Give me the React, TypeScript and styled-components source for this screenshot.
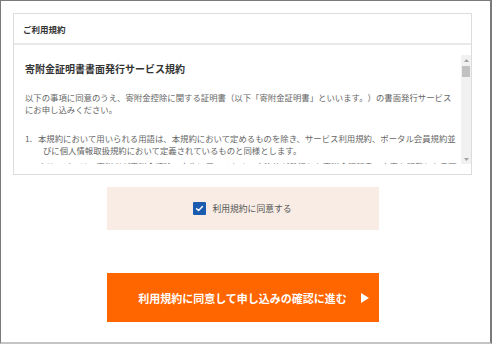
import styled, { createGlobalStyle } from "styled-components"

const GlobalStyle = createGlobalStyle`
  html, body {
    margin: 0;
    padding: 0;
    background: #fff;
  }
  body {
    font-family: "Noto Sans CJK JP", "Noto Sans", sans-serif;
    color: #333;
    text-spacing-trim: space-all;
  }
`

const Frame = styled.div`
  box-sizing: border-box;
  width: 492px;
  height: 344px;
  border: 1px solid #7a7a7a;
  border-right-width: 2px;
  border-bottom: 2px solid #c4c4c4;
  padding: 12px 0 0 12px;
`

const Column = styled.div`
  width: 459px;
  display: flex;
  flex-direction: column;
  align-items: center;
`

const TermsCard = styled.section`
  box-sizing: border-box;
  width: 100%;
  border: 1px solid #dcdcdc;
  display: flex;
  flex-direction: column;
`

const CardHeader = styled.h2`
  margin: 0;
  height: 29px;
  display: flex;
  align-items: center;
  padding: 0 9px;
  font-size: 8.5px;
  font-weight: bold;
  color: #333;
  border-bottom: 2px solid #e9e9e9;
`

const CardBody = styled.div`
  display: flex;
  height: 109px;
  padding: 10px 0 10px 11px;
`

const ScrollArea = styled.div`
  flex: 1;
  min-width: 0;
  overflow: hidden;
  padding-right: 2px;
`

const ScrollTrack = styled.div`
  width: 10px;
  background: #f1f1f1;
  display: flex;
  flex-direction: column;
`

const ScrollButton = styled.div`
  height: 10px;
  display: flex;
  align-items: center;
  justify-content: center;
`

const ThumbRail = styled.div`
  flex: 1;
  padding: 1px;
`

const Thumb = styled.div`
  height: 11px;
  background: #c1c1c1;
`

const TermsContent = styled.div`
  padding-top: 6px;
  color: #666;
  font-size: 8.4px;
  line-height: 12px;
`

const TermsTitle = styled.h3`
  margin: 0 0 15px;
  font-size: 10px;
  line-height: 15px;
  font-weight: bold;
  color: #333;
`

const Paragraph = styled.p`
  margin: 0 0 17px;
`

const Clauses = styled.ol`
  margin: 0;
  padding: 0;
  list-style: none;
`

const Clause = styled.li`
  padding-left: 18px;
  text-indent: -18px;
  margin-bottom: 4px;
`

const ClauseNumber = styled.span`
  display: inline-block;
  width: 13px;
  text-indent: 0;
`

const AgreePanel = styled.label`
  box-sizing: border-box;
  margin-top: 12px;
  width: 272px;
  height: 43px;
  background: #f8ece4;
  display: flex;
  align-items: center;
  justify-content: center;
  gap: 6px;
  font-size: 8.8px;
  color: #555;
  cursor: pointer;
`

const CheckBox = styled.span<{ $checked: boolean }>`
  width: 13px;
  height: 13px;
  border-radius: 1px;
  background: ${(p) => (p.$checked ? "#1b5cb0" : "#fff")};
  display: flex;
  align-items: center;
  justify-content: center;
`

const HiddenInput = styled.input`
  display: none;
`

const ProceedButton = styled.button`
  position: relative;
  margin-top: 43px;
  width: 272px;
  height: 49px;
  border: none;
  background: #ff6600;
  color: #fff;
  font-family: inherit;
  font-size: 11px;
  font-weight: bold;
  cursor: pointer;
`

const ArrowIcon = styled.svg`
  position: absolute;
  right: 10px;
  top: 50%;
  transform: translateY(-50%);
`

const clauses = [
  "本規約において用いられる用語は、本規約において定めるものを除き、サービス利用規約、ポータル会員規約並びに個人情報取扱規約において定義されているものと同様とします。",
  "本サービスは、寄附者が寄附金控除の申告に用いるため、自治体が発行した寄附金証明書の内容を記載した書面を発行するサービスをいいます。",
  "寄附者は、本規約に同意のうえ、当社所定の方法により本サービスの利用を申し込むものとします。",
  "書面の発行には、申し込み完了後、所定の日数を要する場合があります。",
  "書面は、寄附者が登録した住所宛てに郵送するものとし、登録内容の誤りにより届かなかった場合、当社は責任を負いません。",
  "本サービスの申し込み完了後は、申し込み内容の変更及び取り消しはできません。",
  "当社は、本サービスの内容を寄附者に事前に通知することなく変更し、または提供を中止することがあります。",
  "本規約に定めのない事項については、サービス利用規約の定めに従うものとします。",
]

export default function App() {
  return (
    <>
      <GlobalStyle />
      <Frame>
        <Column>
          <TermsCard>
            <CardHeader>ご利用規約</CardHeader>
            <CardBody>
              <ScrollArea>
                <TermsContent>
                  <TermsTitle>寄附金証明書書面発行サービス規約</TermsTitle>
                  <Paragraph>
                    以下の事項に同意のうえ、寄附金控除に関する証明書（以下「寄附金証明書」といいます。）の書面発行サービスにお申し込みください。
                  </Paragraph>
                  <Clauses>
                    {clauses.map((text, i) => (
                      <Clause key={i}>
                        <ClauseNumber>{i + 1}.</ClauseNumber>
                        {text}
                      </Clause>
                    ))}
                  </Clauses>
                </TermsContent>
              </ScrollArea>
              <ScrollTrack>
                <ScrollButton>
                  <svg width="5" height="3" viewBox="0 0 5 3">
                    <polygon points="2.5,0 5,3 0,3" fill="#a3a3a3" />
                  </svg>
                </ScrollButton>
                <ThumbRail>
                  <Thumb />
                </ThumbRail>
                <ScrollButton>
                  <svg width="5" height="3" viewBox="0 0 5 3">
                    <polygon points="0,0 5,0 2.5,3" fill="#a3a3a3" />
                  </svg>
                </ScrollButton>
              </ScrollTrack>
            </CardBody>
          </TermsCard>

          <AgreePanel>
            <HiddenInput type="checkbox" defaultChecked />
            <CheckBox $checked>
              <svg width="9" height="9" viewBox="0 0 10 10" fill="none">
                <path d="M1.8 5.2 L4 7.3 L8.3 2.8" stroke="#fff" strokeWidth="1.6" strokeLinecap="round" strokeLinejoin="round" />
              </svg>
            </CheckBox>
            利用規約に同意する
          </AgreePanel>

          <ProceedButton type="button">
            利用規約に同意して申し込みの確認に進む
            <ArrowIcon width="8" height="10" viewBox="0 0 8 10">
              <polygon points="0,0 8,5 0,10" fill="#fff" />
            </ArrowIcon>
          </ProceedButton>
        </Column>
      </Frame>
    </>
  )
}
